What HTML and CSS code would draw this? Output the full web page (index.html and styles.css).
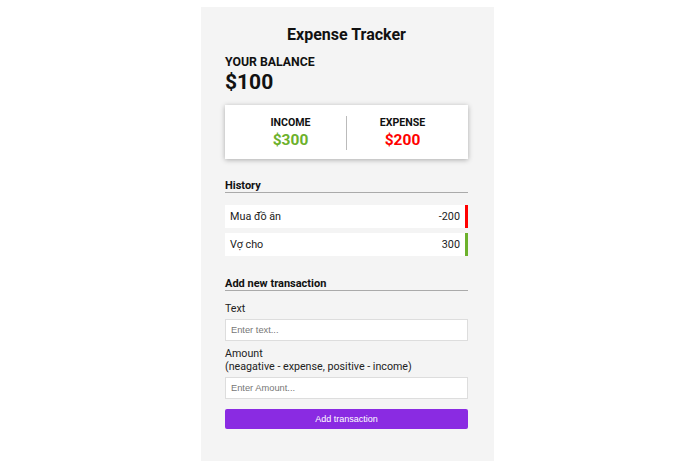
FILE: index.html
```html
<!DOCTYPE html>
<html>
<head>
<meta charset="utf-8">
<link rel="stylesheet" href="styles.css">
</head>
<body>
<div class="app">
  <h1 class="title">Expense Tracker</h1>
  <div class="balance">
    <h4 class="balance-label">YOUR BALANCE</h4>
    <div class="balance-value">$100</div>
  </div>
  <div class="inc-exp">
    <div class="col">
      <div class="col-label">INCOME</div>
      <div class="money plus">$300</div>
    </div>
    <div class="col">
      <div class="col-label">EXPENSE</div>
      <div class="money minus">$200</div>
    </div>
  </div>
  <h3 class="section">History</h3>
  <ul class="list">
    <li class="item minus-item"><span>Mua đồ ăn</span><span>-200</span></li>
    <li class="item plus-item"><span>Vợ cho</span><span>300</span></li>
  </ul>
  <h3 class="section section-add">Add new transaction</h3>
  <form class="form">
    <label class="label">Text</label>
    <input class="input" type="text" placeholder="Enter text...">
    <label class="label">Amount<br>(neagative - expense, positive - income)</label>
    <input class="input" type="text" placeholder="Enter Amount...">
    <button class="btn" type="button">Add transaction</button>
  </form>
</div>
</body>
</html>
```
FILE: styles.css
```css
* { box-sizing: border-box; }
html, body { margin: 0; padding: 0; background: #fff; }
body {
  font-family: Roboto, "Liberation Sans", Arial, sans-serif;
  color: #111;
  padding-top: 7px;
}
.app {
  width: 293px;
  margin: 0 auto 0 201px;
  background: #f4f4f4;
  padding: 18px 26px 32px 24px;
  height: 454px;
}
.title {
  margin: 0;
  text-align: center;
  font-size: 16px;
  font-weight: 700;
  line-height: 20px;
}
.balance { margin-top: 9px; }
.balance-label {
  margin: 0;
  font-size: 12.3px;
  font-weight: 700;
  line-height: 16px;
}
.balance-value {
  font-size: 21px;
  font-weight: 700;
  line-height: 24px;
}
.inc-exp {
  margin-top: 11px;
  background: #fff;
  box-shadow: 0 1px 5px rgba(0,0,0,0.3);
  display: flex;
  padding: 11px 10px 9px;
}
.col {
  flex: 1;
  text-align: center;
}
.col:first-child { border-right: 1px solid #bbb; }
.col-label {
  font-size: 10.6px;
  font-weight: 700;
  line-height: 14px;
}
.money {
  font-size: 15.5px;
  font-weight: 700;
  line-height: 19px;
  margin-top: 1px;
}
.plus { color: #6cb12c; }
.minus { color: #f00; }
.section {
  margin: 20px 0 0;
  font-size: 11px;
  font-weight: 700;
  line-height: 13px;
  border-bottom: 1px solid #aaa;
  padding-bottom: 0;
}
.list {
  list-style: none;
  margin: 12px 0 0;
  padding: 0;
}
.item {
  background: #fff;
  display: flex;
  justify-content: space-between;
  align-items: center;
  height: 23px;
  padding: 0 5px 0 5px;
  font-size: 10.8px;
  color: #222;
  margin-bottom: 5px;
}
.minus-item { border-right: 3px solid #f00; }
.plus-item { border-right: 3px solid #6cb12c; }
.section-add { margin-top: 21px; }
.form { display: flex; flex-direction: column; margin-top: 11px; }
.label {
  font-size: 10.7px;
  line-height: 13px;
  color: #222;
  margin-bottom: 4px;
}
.input {
  height: 22px;
  border: 1px solid #ddd;
  background: #fff;
  padding: 0 5px;
  font-family: "Liberation Sans", Arial, sans-serif;
  font-size: 9.3px;
  margin-bottom: 6px;
}
.input::placeholder { color: #777; }
.btn {
  margin-top: 4px;
  height: 20px;
  border: 0;
  border-radius: 2px;
  background: #8a2be2;
  color: #fff;
  font-family: "Liberation Sans", Arial, sans-serif;
  font-size: 9px;
}
```
